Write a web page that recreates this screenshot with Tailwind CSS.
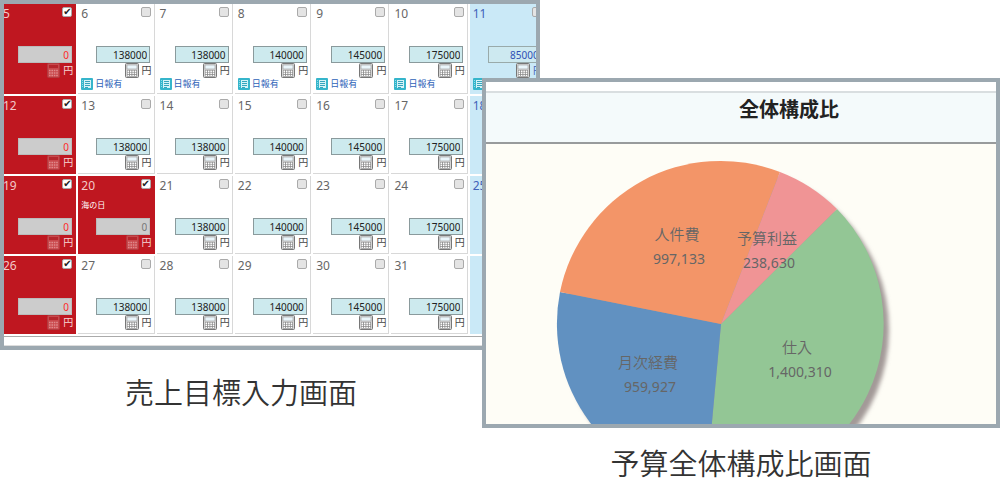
<!DOCTYPE html>
<html lang="ja">

<head>
  <meta charset="UTF-8">
  <meta name="viewport" content="width=device-width, initial-scale=1.0">
  <title>売上目標・予算構成比</title>
  <script src="https://cdn.jsdelivr.net/npm/@tailwindcss/browser@4"></script>
</head>

<body class="bg-white font-['Noto_Sans','Noto_Sans_CJK_JP',sans-serif] text-[#333]">

  <!-- shared icons -->
  <svg class="hidden">
    <symbol id="calc" viewBox="0 0 14 15">
      <rect x="0.5" y="0.5" width="13" height="14" rx="1" fill="#d5d5d5" stroke="#777" />
      <rect x="2" y="2" width="10" height="4" fill="#eaf6fb" stroke="#999" stroke-width="0.6" />
      <rect x="2" y="7" width="10" height="6.500" fill="#888" />
      <path d="M2.500 8.200h9M2.500 10.300h9M2.500 12.400h9" stroke="#fff" stroke-width="1.400" stroke-dasharray="1.600 0.800" />
    </symbol>
    <symbol id="calc-red" viewBox="0 0 14 15">
      <rect x="1.500" y="0.500" width="12" height="14" rx="1" fill="#c9484c" stroke="#b23a3e" />
      <rect x="3" y="2" width="9" height="3" fill="#b5262c" />
      <path d="M3 7.500h9M3 10h9M3 12.500h9" stroke="#e08a8c" stroke-width="1.400" stroke-dasharray="1.600 0.800" />
    </symbol>
    <symbol id="report" viewBox="0 0 12 12">
      <rect width="12" height="12" rx="1" fill="#35b5cb" />
      <rect x="3" y="2" width="7" height="8" fill="#d5f3f7" />
      <path d="M4 3.500h5M4 5.500h5M4 7.500h5M4 9.500h3" stroke="#35a5bd" />
      <path d="M1.500 2v8" stroke="#8fdde8" stroke-dasharray="1 1" />
    </symbol>
  </svg>

  <main class="grid grid-cols-1 items-start">
    <figure class="col-start-1 row-start-1">
      <div class="w-[54%] border-4 border-[#9ca8b0] overflow-hidden">
        <table class="-ml-1 w-[548px] table-fixed border-collapse">
          <tbody id="calendar"></tbody>
        </table>
        <div class="h-[10px] border-t border-[#aaa] border-b border-b-[#ddd]"></div>
      </div>
      <figcaption class="w-[48.2%] mt-[22px] text-center text-[29px] leading-[42px] font-[350]">売上目標入力画面</figcaption>
    </figure>

    <figure class="z-10 col-start-1 row-start-1 mt-[78px] w-[51.8%] justify-self-end">
      <div class="border-4 border-[#9ca8b0] overflow-hidden bg-white pt-[9px]">
        <h2 class="h-[53px] border-t-2 border-t-[#d9dee0] border-b-2 border-b-[#989b9c] bg-[#f4fafb] pl-24 text-center text-[20px] leading-[34px] font-bold text-[#222]">全体構成比</h2>
        <svg class="block h-[280px] w-full bg-[#fefdf6]" viewBox="0 0 510 280" preserveAspectRatio="xMidYMin meet">
          <defs>
            <filter id="shadow" x="-10%" y="-10%" width="120%" height="120%">
              <feGaussianBlur stdDeviation="2" />
            </filter>
          </defs>
          <circle cx="240" cy="186" r="163" fill="#a39a98" filter="url(#shadow)" />
          <path d="M235 180L351 65A164 164 0 0 1 220 343Z" fill="#93c695" />
          <path d="M235 180L220 343A164 164 0 0 1 74 148Z" fill="#6191c1" />
          <path d="M235 180L74 148A164 164 0 0 1 294 28Z" fill="#f39568" />
          <path d="M235 180L294 28A164 164 0 0 1 351 65Z" fill="#f09495" />
          <g text-anchor="middle" fill="#666" class="text-[15px] font-[350]">
            <text x="191" y="96">人件費</text>
            <text x="281" y="100">予算利益</text>
            <text x="311" y="209">仕入</text>
            <text x="162" y="224">月次経費</text>
          </g>
          <g text-anchor="middle" fill="#666" class="text-[14px]">
            <text x="193" y="120">997,133</text>
            <text x="283" y="124">238,630</text>
            <text x="314" y="233">1,400,310</text>
            <text x="164" y="248">959,927</text>
          </g>
        </svg>
      </div>
      <figcaption class="mt-[15px] text-center text-[29px] leading-[42px] font-[350]">予算全体構成比画面</figcaption>
    </figure>
  </main>

  <script>
    const targets = [0, 138000, 138000, 140000, 145000, 175000, 85000];
    const holidays = { 20: '海の日' };

    function cellHtml(day, col, report) {
      const closed = col === 0 || day in holidays;
      const saturday = col === 6;
      const tone = closed ? 'bg-[#bf1720] border-[#bf1720] text-[#f3c9c9]'
        : saturday ? 'bg-[#cae9f7] border-[#cae9f7] text-[#3f62b8]'
        : 'bg-white border-[#d8d8d8] text-[#666]';
      const height = report ? 'h-[90px]' : 'h-[78px]';
      if (day > 31) return `<div class="${height} ${tone}"></div>`;

      const box = col === 0 ? 'bg-[#ccc] border-[#bbb] text-[#ff2a2a]'
        : closed ? 'bg-[#ccc] border-[#bbb] text-[#777]'
        : saturday ? 'bg-[#cde9f0] border-[#9aa] text-[#2f4fb5]'
        : 'bg-[#cdeaee] border-[#8a9a9c] text-[#222]';
      return `
        <div class="${height} ${tone} border-r border-b pl-[3px]">
          <div class="h-[42px] pr-[3px] flex justify-between items-start">
            <label for="day-${day}" class="text-[12px] leading-[20px]">${day}
              <span class="block text-[8px] leading-[18px] text-white">${holidays[day] || ''}</span>
            </label>
            <input type="checkbox" id="day-${day}" ${closed ? 'checked' : ''}
              class="mt-[3px] size-[10px] shrink-0 appearance-none rounded-[2px] border border-[#aaa] bg-[#e4e4e4] checked:bg-white checked:before:block checked:before:text-[10px] checked:before:leading-[8px] checked:before:text-[#222] checked:before:content-['✔'] checked:before:font-['DejaVu_Sans']">
          </div>
          <input type="text" aria-label="${day}日の売上目標" value="${day in holidays ? 0 : targets[col]}"
            class="block ml-[15px] w-[54px] h-[17px] border px-[2px] text-right text-[10px] ${box}">
          <div class="flex justify-end items-start gap-[3px] pr-[2px]">
            <svg class="w-[14px] h-[15px]"><use href="${closed ? '#calc-red' : '#calc'}" /></svg>
            <span class="text-[10px] leading-[14px] ${closed ? 'text-[#f6d5d5]' : saturday ? '' : 'text-[#444]'}">円</span>
          </div>
          ${report && !closed ? `
          <a href="#" class="flex items-center gap-[2px] text-[9px] leading-[12px] text-[#2d62b8]">
            <svg class="size-[12px]"><use href="#report" /></svg>日報有
          </a>` : ''}
        </div>`;
    }

    const calendar = document.getElementById('calendar');
    [5, 12, 19, 26].forEach((first, week) => {
      const row = document.createElement('tr');
      for (let col = 0; col < 7; col++) {
        row.innerHTML += `<td class="p-0 pr-[2px] pb-[2px] align-top">${cellHtml(first + col, col, week === 0)}</td>`;
      }
      calendar.appendChild(row);
    });
  </script>
</body>

</html>
